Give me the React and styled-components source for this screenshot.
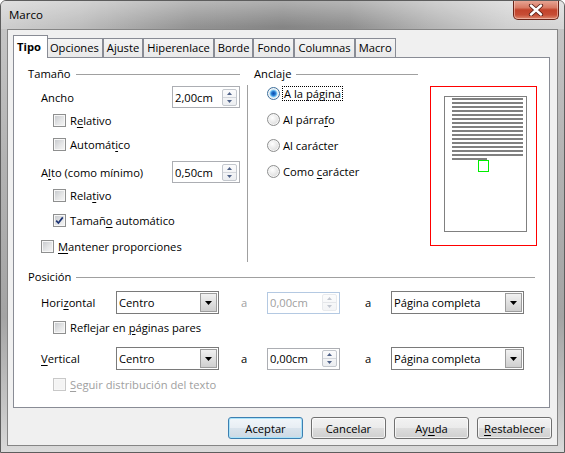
import React from 'react';
import styled, { createGlobalStyle, css } from 'styled-components';

const GlobalStyle = createGlobalStyle`
  html, body {
    margin: 0;
    padding: 0;
  }
  body {
    width: 565px;
    height: 453px;
    overflow: hidden;
    font-family: "Open Sans", "Noto Sans", sans-serif;
    font-size: 11.2px;
    color: #000;
  }
  * {
    box-sizing: border-box;
  }
  u {
    text-decoration-thickness: 1px;
    text-underline-offset: 2px;
  }
`;

const Window = styled.div`
  width: 565px;
  height: 453px;
  display: flex;
  flex-direction: column;
  padding: 0 6px 6px 6px;
  border: 1px solid #5d5d5d;
  border-radius: 6px 6px 0 0;
  overflow: hidden;
  background: linear-gradient(180deg, #c8c8c8 0%, #b3b3b3 35%, #a4a4a4 70%, #c9c9c9 92%, #dadada 100%);
`;

const TitleBar = styled.div`
  height: 28px;
  flex: none;
  display: flex;
  align-items: flex-start;
  justify-content: space-between;
  margin: 0 -6px;
  padding: 0 6px;
  background:
    linear-gradient(180deg, rgba(255, 255, 255, 0.35) 0px, rgba(255, 255, 255, 0) 26px),
    linear-gradient(90deg, #cfcfcf 0%, #bdbdbd 14%, #939393 34%, #858585 50%, #8f8f8f 62%, #b4b4b4 76%, #d0d0d0 90%, #d6d6d6 100%);
`;

const TitleText = styled.div`
  margin: 6px 0 0 2px;
  font-size: 11.5px;
  line-height: 16px;
`;

const CloseButton = styled.div`
  width: 46px;
  height: 20px;
  margin: -1px -1px 0 0;
  border: 1px solid #6a2418;
  border-top: none;
  border-radius: 0 0 5px 5px;
  display: flex;
  align-items: center;
  justify-content: center;
  background: linear-gradient(180deg, #e9aa9a 0%, #d87a64 40%, #c2432b 52%, #c74d35 78%, #dd8a70 100%);
  box-shadow: inset 0 0 0 1px rgba(255, 220, 210, 0.5);
`;

const Client = styled.div`
  flex: 1;
  display: flex;
  flex-direction: column;
  background: #f0f0f0;
  border: 1px solid #858585;
  padding: 5px 5px 6px 5px;
`;

const TabStrip = styled.div`
  height: 22px;
  flex: none;
  display: flex;
  align-items: flex-end;
`;

const Tab = styled.div`
  height: 19px;
  padding: 0 3px;
  border: 1px solid #898c95;
  border-bottom: none;
  background: linear-gradient(180deg, #f4f4f4 0%, #e9e9e9 100%);
  line-height: 17px;
  white-space: nowrap;
  ${(p) =>
    p.$active &&
    css`
      position: relative;
      z-index: 2;
      height: 23px;
      margin-bottom: -1px;
      margin-right: -2px;
      padding: 0 6px 0 3px;
      background: #fff;
      font-weight: 700;
      line-height: 22px;
    `}
`;

const Panel = styled.div`
  height: 351px;
  flex: none;
  margin-right: 2px;
  border: 1px solid #898c95;
  background: #fff;
  padding: 9px 14px 0 14px;
`;

const Upper = styled.div`
  display: flex;
  height: 195px;
`;

const SizeColumn = styled.div`
  width: 212px;
  flex: none;
  display: flex;
  flex-direction: column;
`;

const Separator = styled.div`
  width: 1px;
  height: 177px;
  margin: 18px 6px 0 7px;
  background: #a0a0a0;
  flex: none;
`;

const AnchorColumn = styled.div`
  width: 164px;
  flex: none;
  display: flex;
  flex-direction: column;
`;

const GroupHeader = styled.div`
  height: 14px;
  display: flex;
  align-items: center;
  line-height: 14px;
  flex: none;
`;

const Rule = styled.div`
  flex: 1;
  height: 1px;
  margin-left: 5px;
  background: #a0a0a0;
`;

const Row = styled.div`
  display: flex;
  align-items: center;
  flex: none;
  height: ${(p) => p.$h || 24}px;
  margin-top: ${(p) => p.$mt || 0}px;
  padding-left: ${(p) => p.$indent || 0}px;
  color: ${(p) => (p.$disabled ? '#a0a0a0' : '#000')};
  white-space: nowrap;
`;

const FieldLabel = styled.span`
  width: ${(p) => (p.$w ? `${p.$w}px` : 'auto')};
  flex: none;
`;

const Box = styled.span`
  width: 13px;
  height: 13px;
  flex: none;
  margin-right: 4px;
  display: flex;
  align-items: center;
  justify-content: center;
  border: 1px solid ${(p) => (p.$disabled ? '#c8c8c8' : '#8e8f8f')};
  background: ${(p) =>
    p.$disabled ? '#f4f4f4' : 'linear-gradient(135deg, #c3c6ca 0%, #e4e5e6 55%, #f6f6f6 100%)'};
  box-shadow: inset 0 0 0 1px #f7f7f7;
`;

const RadioDot = styled.span`
  width: 13px;
  height: 13px;
  flex: none;
  margin-right: 3px;
  border-radius: 50%;
  border: 1px solid ${(p) => (p.$checked ? '#3c6f9c' : '#8e8f8f')};
  background: ${(p) =>
    p.$checked
      ? 'radial-gradient(circle at 50% 50%, #0a4fb0 0px, #2779d0 2px, #6fc0f0 3.2px, #d3ecfa 4.2px, #f2f2f2 5.2px)'
      : 'radial-gradient(circle at 40% 35%, #ffffff 0%, #e6e6e6 55%, #c8c8c8 100%)'};
  box-shadow: inset 0 0 0 1px #f6f6f6;
`;

const Focus = styled.span`
  outline: 1px dotted #000;
  outline-offset: 0;
  padding: 0 1px;
  line-height: 13px;
`;

const SpinField = styled.div`
  width: ${(p) => p.$w}px;
  height: 22px;
  flex: none;
  margin-left: ${(p) => (p.$auto ? 'auto' : '0')};
  display: flex;
  align-items: center;
  padding-left: 2px;
  background: #fff;
  border: 1px solid ${(p) => (p.$disabled ? '#b4c9e2' : '#acaeb3')};
  color: ${(p) => (p.$disabled ? '#a0a0a0' : '#000')};
`;

const SpinButtons = styled.div`
  margin-left: auto;
  margin-right: 2px;
  width: 15px;
  height: 17px;
  display: flex;
  flex-direction: column;
  border: 1px solid ${(p) => (p.$disabled ? '#dadde2' : '#c3c7cd')};
  border-radius: 2px;
  background: linear-gradient(180deg, #fbfbfc 0%, #eceef1 100%);
  opacity: ${(p) => (p.$disabled ? 0.6 : 1)};
`;

const SpinHalf = styled.div`
  flex: 1;
  display: flex;
  align-items: center;
  justify-content: center;
  & + & {
    border-top: 1px solid #d3d6db;
  }
`;

const Combo = styled.div`
  width: ${(p) => p.$w}px;
  height: 23px;
  flex: none;
  display: flex;
  align-items: center;
  padding-left: 2px;
  background: #fff;
  border: 1px solid #7a7a7a;
`;

const ComboButton = styled.div`
  margin-left: auto;
  margin-right: 1px;
  width: 17px;
  height: 19px;
  display: flex;
  align-items: center;
  justify-content: center;
  border: 1px solid #9c9c9c;
  background: linear-gradient(180deg, #f1f1f1 0%, #e0e0e0 50%, #cfcfcf 100%);
`;

const ACell = styled.span`
  width: ${(p) => p.$w}px;
  padding-left: ${(p) => p.$pl}px;
  flex: none;
  color: ${(p) => (p.$disabled ? '#a0a0a0' : '#000')};
`;

const PreviewBox = styled.div`
  width: 107px;
  height: 160px;
  flex: none;
  margin: 19px 0 0 12px;
  border: 1px solid #ff0000;
  background: #fff;
  svg {
    display: block;
  }
`;

const PositionGroup = styled.div`
  margin-top: 8px;
  display: flex;
  flex-direction: column;
`;

const ButtonRow = styled.div`
  margin-top: 9px;
  display: flex;
  justify-content: flex-end;
  gap: 8px;
`;

const Button = styled.div`
  width: 75px;
  height: 22px;
  display: flex;
  align-items: center;
  justify-content: center;
  border: 1px solid #707070;
  border-radius: 3px;
  background: linear-gradient(180deg, #f2f2f2 0%, #ebebeb 48%, #dddddd 52%, #cfcfcf 100%);
  box-shadow: inset 0 0 0 1px rgba(255, 255, 255, 0.7);
  ${(p) =>
    p.$default &&
    css`
      border-color: #3c7fb1;
      background: linear-gradient(180deg, #f1f6fa 0%, #e8eef4 48%, #d9e3ec 52%, #cdd9e4 100%);
      box-shadow: inset 0 0 0 1px #a9e3fa;
    `}
`;

const Arrow = ({ up, color = '#4f6288' }) => (
  <svg width="5" height="3" viewBox="0 0 5 3">
    <path d={up ? 'M0 3 L2.5 0 L5 3 Z' : 'M0 0 L5 0 L2.5 3 Z'} fill={color} />
  </svg>
);

const Check = ({ checked, disabled, children }) => (
  <>
    <Box $disabled={disabled}>
      {checked && (
        <svg width="9" height="9" viewBox="0 0 9 9">
          <path d="M1.2 4.6 L3.4 7 L7.8 1.4" fill="none" stroke="#1d3474" strokeWidth="1.7" />
        </svg>
      )}
    </Box>
    <span>{children}</span>
  </>
);

const Spin = ({ value, w, auto, disabled }) => (
  <SpinField $w={w} $auto={auto} $disabled={disabled}>
    {value}
    <SpinButtons $disabled={disabled}>
      <SpinHalf>
        <Arrow up color={disabled ? '#9aa3b3' : '#4f6288'} />
      </SpinHalf>
      <SpinHalf>
        <Arrow color={disabled ? '#9aa3b3' : '#4f6288'} />
      </SpinHalf>
    </SpinButtons>
  </SpinField>
);

const Select = ({ value, w }) => (
  <Combo $w={w}>
    {value}
    <ComboButton>
      <svg width="7" height="4" viewBox="0 0 7 4">
        <path d="M0 0 L7 0 L3.5 4 Z" fill="#000" />
      </svg>
    </ComboButton>
  </Combo>
);

const PagePreview = () => {
  const lines = Array.from({ length: 16 }, (_, k) => k);
  return (
    <PreviewBox>
      <svg width="105" height="158" viewBox="0 0 105 158">
        <rect x="13.5" y="9.5" width="82" height="135" fill="#fff" stroke="#808080" />
        {lines.map((k) => (
          <rect key={k} x="21" y={11 + k * 4} width={k === 15 ? 35 : 71} height="2" fill="#808080" />
        ))}
        <rect x="47.5" y="73.5" width="10" height="11" fill="none" stroke="#00ee00" />
      </svg>
    </PreviewBox>
  );
};

const tabs = ['Tipo', 'Opciones', 'Ajuste', 'Hiperenlace', 'Borde', 'Fondo', 'Columnas', 'Macro'];

const PositionRow = ({ label, disabledSpin, mt }) => (
  <Row $h={23} $mt={mt} $indent={13}>
    <FieldLabel $w={75}>{label}</FieldLabel>
    <Select value="Centro" w={103} />
    <ACell $w={48} $pl={22} $disabled={disabledSpin}>
      a
    </ACell>
    <Spin value="0,00cm" w={73} disabled={disabledSpin} />
    <ACell $w={51} $pl={25}>
      a
    </ACell>
    <Select value="Página completa" w={133} />
  </Row>
);

const App = () => (
  <>
    <GlobalStyle />
    <Window>
      <TitleBar>
        <TitleText>Marco</TitleText>
        <CloseButton>
          <svg width="16" height="12" viewBox="0 0 16 12">
            <path d="M3 1.5 L13 10.5 M13 1.5 L3 10.5" stroke="#5b2118" strokeWidth="4.2" strokeLinecap="round" />
            <path d="M3 1.5 L13 10.5 M13 1.5 L3 10.5" stroke="#fff" strokeWidth="2.4" strokeLinecap="round" />
          </svg>
        </CloseButton>
      </TitleBar>
      <Client>
        <TabStrip>
          {tabs.map((t, i) => (
            <Tab key={t} $active={i === 0}>
              {t}
            </Tab>
          ))}
        </TabStrip>
        <Panel>
          <Upper>
            <SizeColumn>
              <GroupHeader>
                Tamaño
                <Rule />
              </GroupHeader>
              <Row $h={22} $mt={5} $indent={13}>
                <FieldLabel>Ancho</FieldLabel>
                <Spin value="2,00cm" w={68} auto />
              </Row>
              <Row $indent={25}>
                <Check>
                  R<u>e</u>lativo
                </Check>
              </Row>
              <Row $indent={25}>
                <Check>
                  Automát<u>i</u>co
                </Check>
              </Row>
              <Row $h={22} $mt={5} $indent={13}>
                <FieldLabel>
                  A<u>l</u>to (como mínimo)
                </FieldLabel>
                <Spin value="0,50cm" w={68} auto />
              </Row>
              <Row $h={25} $indent={25}>
                <Check>
                  Rela<u>t</u>ivo
                </Check>
              </Row>
              <Row $h={25} $indent={25}>
                <Check checked>
                  Tamañ<u>o</u> automático
                </Check>
              </Row>
              <Row $h={26} $indent={13}>
                <Check>
                  <u>M</u>antener proporciones
                </Check>
              </Row>
            </SizeColumn>
            <Separator />
            <AnchorColumn>
              <GroupHeader>
                Anclaje
                <Rule />
              </GroupHeader>
              <Row $h={26} $mt={-1} $indent={13}>
                <RadioDot $checked />
                <Focus>
                  A la pá<u>g</u>ina
                </Focus>
              </Row>
              <Row $h={26} $indent={13}>
                <RadioDot />
                <span>
                  Al párra<u>f</u>o
                </span>
              </Row>
              <Row $h={26} $indent={13}>
                <RadioDot />
                <span>Al carácter</span>
              </Row>
              <Row $h={26} $indent={13}>
                <RadioDot />
                <span>
                  Como <u>c</u>arácter
                </span>
              </Row>
            </AnchorColumn>
            <PagePreview />
          </Upper>
          <PositionGroup>
            <GroupHeader>
              Posición
              <Rule />
            </GroupHeader>
            <PositionRow
              mt={7}
              disabledSpin
              label={
                <>
                  Hori<u>z</u>ontal
                </>
              }
            />
            <Row $h={26} $indent={25}>
              <Check>
                Reflejar en <u>p</u>áginas pares
              </Check>
            </Row>
            <PositionRow
              mt={7}
              label={
                <>
                  <u>V</u>ertical
                </>
              }
            />
            <Row $h={28} $indent={25} $disabled>
              <Check disabled>
                <u>S</u>eguir distribución del texto
              </Check>
            </Row>
          </PositionGroup>
        </Panel>
        <ButtonRow>
          <Button $default>Aceptar</Button>
          <Button>Cancelar</Button>
          <Button>
            Ay<u>u</u>da
          </Button>
          <Button>
            <u>R</u>establecer
          </Button>
        </ButtonRow>
      </Client>
    </Window>
  </>
);

export default App;
